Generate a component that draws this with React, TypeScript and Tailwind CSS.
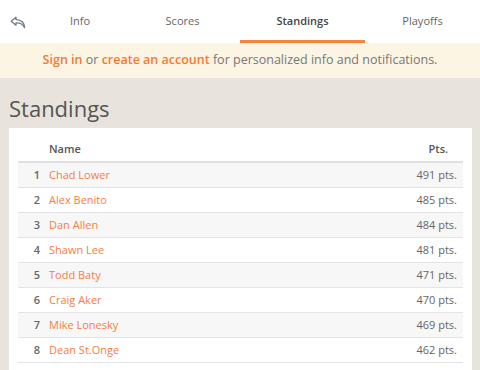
const rows = [
  { rank: 1, name: "Chad Lower", pts: 491 },
  { rank: 2, name: "Alex Benito", pts: 485 },
  { rank: 3, name: "Dan Allen", pts: 484 },
  { rank: 4, name: "Shawn Lee", pts: 481 },
  { rank: 5, name: "Todd Baty", pts: 471 },
  { rank: 6, name: "Craig Aker", pts: 470 },
  { rank: 7, name: "Mike Lonesky", pts: 469 },
  { rank: 8, name: "Dean St.Onge", pts: 462 },
];

function BackIcon() {
  return (
    <svg width="16" height="13" viewBox="0 0 16 13" fill="none">
      <path
        d="M6 1.2 L1.2 5.2 L6 9.2 V6.8 C9.5 6.6 12.6 7.6 14.6 11.6 C14.4 7.2 11.6 3.8 6 3.6 Z"
        stroke="#6f7a8a"
        strokeWidth="1.3"
        strokeLinejoin="round"
      />
    </svg>
  );
}

function Tab({ label, active, width }: { label: string; active?: boolean; width: string }) {
  return (
    <div className={`${width} relative flex items-center justify-center h-full`}>
      <span className={`text-[11px] ${active ? "font-semibold text-[#444]" : "text-[#666]"}`}>{label}</span>
      {active && <div className="absolute left-0 right-0 bottom-0 h-[3px] bg-[#f5843f]" />}
    </div>
  );
}

export default function App() {
  return (
    <div className="w-[480px] h-[370px] overflow-hidden bg-[#e8e3dc] font-['Open_Sans',sans-serif]">
      <div className="h-[43px] bg-white flex items-stretch">
        <div className="w-[35px] flex items-center justify-center pt-[1px]">
          <BackIcon />
        </div>
        <Tab label="Info" width="w-[90px]" />
        <Tab label="Scores" width="w-[115px]" />
        <Tab label="Standings" width="w-[125px]" active />
        <Tab label="Playoffs" width="flex-1" />
      </div>
      <div className="h-[35px] bg-[#fcf5e3] flex items-center justify-center text-[12.5px] text-[#777]">
        <span>
          <span className="font-semibold text-[#f47a36]">Sign in</span> or{" "}
          <span className="font-semibold text-[#f47a36]">create an account</span> for personalized info and notifications.
        </span>
      </div>
      <div className="pl-[9px] pr-[8px]">
        <h1 className="text-[22px] text-[#555] leading-none pt-[19px] pb-[9px]">Standings</h1>
        <div className="bg-white px-[9px] pt-[9px] pb-[20px]">
          <div className="h-[26px] flex items-center border-b-2 border-[#e0e0e0] text-[11px] font-semibold text-[#555]">
            <div className="w-[31px]" />
            <div className="flex-1">Name</div>
            <div className="pr-[15px]">Pts.</div>
          </div>
          {rows.map((r, i) => (
            <div
              key={r.rank}
              className={`h-[25px] flex items-center border-b border-[#e4e4e4] text-[11px] ${i % 2 === 0 ? "bg-[#f7f7f7]" : "bg-white"}`}
            >
              <div className="w-[22px] text-right font-semibold text-[#666]">{r.rank}</div>
              <div className="w-[9px]" />
              <div className="flex-1 text-[#f47e3e]">{r.name}</div>
              <div className="pr-[6px] text-[#666]">{r.pts} pts.</div>
            </div>
          ))}
        </div>
      </div>
    </div>
  );
}
